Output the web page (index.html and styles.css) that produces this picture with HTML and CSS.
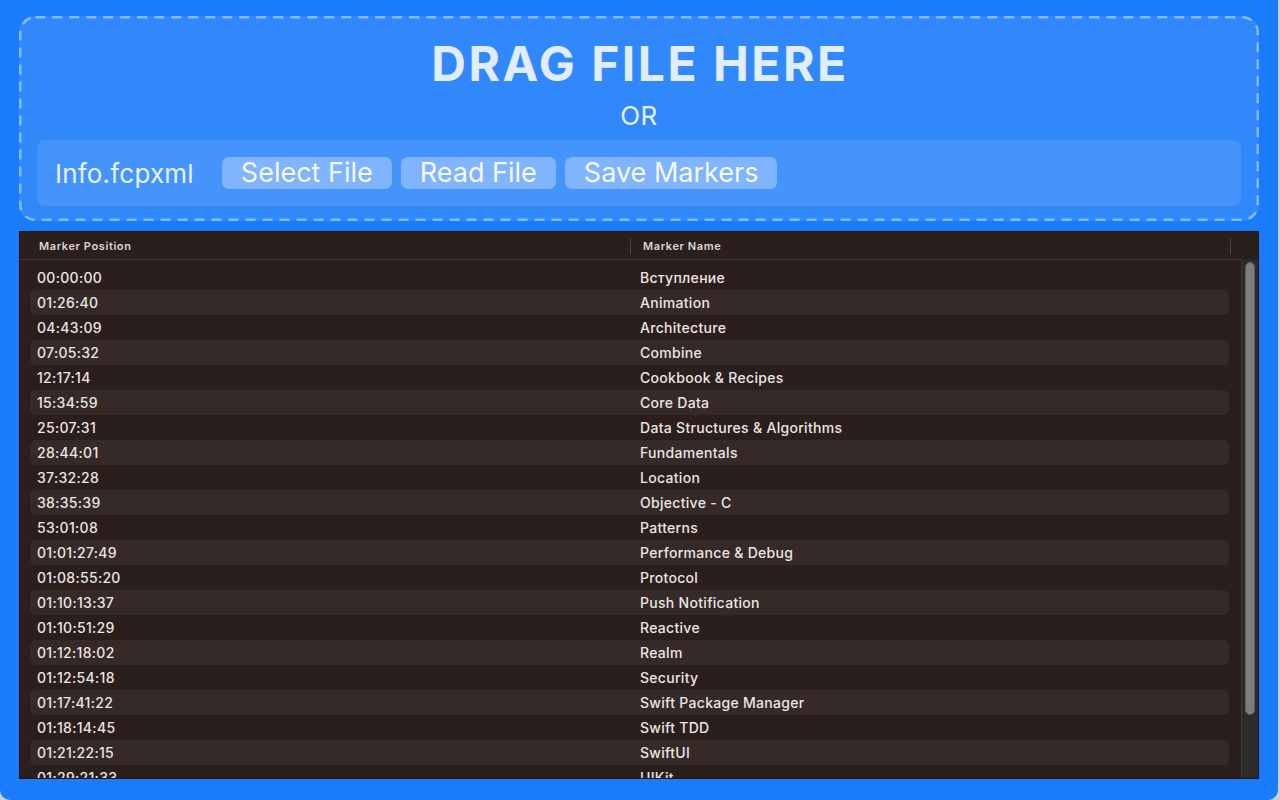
FILE: index.html
```html
<!DOCTYPE html>
<html lang="en">
<head>
<meta charset="utf-8">
<title>Markers</title>
<link rel="stylesheet" href="styles.css">
</head>
<body>
<div class="app">
  <section class="dropzone">
    <svg class="dash" width="1240" height="205" viewBox="0 0 1240 205" aria-hidden="true">
      <rect x="1.25" y="1.25" width="1237.5" height="202.5" rx="15" ry="15" fill="none" stroke="rgba(255,255,255,0.42)" stroke-width="2.5" stroke-dasharray="10 7"/>
    </svg>
    <h1 class="title">DRAG FILE HERE</h1>
    <div class="or">OR</div>
    <div class="controls">
      <span class="filename">Info.fcpxml</span>
      <div class="buttons">
        <button class="btn">Select File</button>
        <button class="btn">Read File</button>
        <button class="btn">Save Markers</button>
      </div>
    </div>
  </section>

  <section class="table">
    <div class="thead">
      <div class="th th-pos">Marker Position</div>
      <div class="th th-name">Marker Name</div>
      <div class="th th-end"></div>
    </div>
    <div class="tbody">
      <div class="rows">
        <div class="row"><span>00:00:00</span><span>Вступление</span></div>
        <div class="row alt"><span>01:26:40</span><span>Animation</span></div>
        <div class="row"><span>04:43:09</span><span>Architecture</span></div>
        <div class="row alt"><span>07:05:32</span><span>Combine</span></div>
        <div class="row"><span>12:17:14</span><span>Cookbook &amp; Recipes</span></div>
        <div class="row alt"><span>15:34:59</span><span>Core Data</span></div>
        <div class="row"><span>25:07:31</span><span>Data Structures &amp; Algorithms</span></div>
        <div class="row alt"><span>28:44:01</span><span>Fundamentals</span></div>
        <div class="row"><span>37:32:28</span><span>Location</span></div>
        <div class="row alt"><span>38:35:39</span><span>Objective - C</span></div>
        <div class="row"><span>53:01:08</span><span>Patterns</span></div>
        <div class="row alt"><span>01:01:27:49</span><span>Performance &amp; Debug</span></div>
        <div class="row"><span>01:08:55:20</span><span>Protocol</span></div>
        <div class="row alt"><span>01:10:13:37</span><span>Push Notification</span></div>
        <div class="row"><span>01:10:51:29</span><span>Reactive</span></div>
        <div class="row alt"><span>01:12:18:02</span><span>Realm</span></div>
        <div class="row"><span>01:12:54:18</span><span>Security</span></div>
        <div class="row alt"><span>01:17:41:22</span><span>Swift Package Manager</span></div>
        <div class="row"><span>01:18:14:45</span><span>Swift TDD</span></div>
        <div class="row alt"><span>01:21:22:15</span><span>SwiftUI</span></div>
        <div class="row"><span>01:29:21:33</span><span>UIKit</span></div>
      </div>
      <div class="scrolltrack"><div class="thumb"></div></div>
    </div>
  </section>
</div>
</body>
</html>
```

FILE: styles.css
```css
* { box-sizing: border-box; }

html, body {
  margin: 0;
  padding: 0;
  width: 1280px;
  height: 800px;
  overflow: hidden;
  background: #cfcfcf;
  font-family: Inter, "Noto Sans", sans-serif;
}

.app {
  width: 1278px;
  height: 800px;
  background: #1b7cf9;
  border-radius: 0 0 10px 10px;
  padding: 16px 19px 0 19px;
  display: flex;
  flex-direction: column;
}

.dropzone {
  position: relative;
  width: 1240px;
  height: 205px;
  background: #3088fb;
  border-radius: 16px;
  padding: 21px 18px 15px;
  display: flex;
  flex-direction: column;
  align-items: center;
}

.dash {
  position: absolute;
  left: 0;
  top: 0;
  pointer-events: none;
}

.title {
  margin: 0;
  font-size: 48px;
  line-height: 54px;
  font-weight: 700;
  color: #e1ecfd;
  letter-spacing: 2.5px;
  padding-left: 2px;
}

.or {
  margin-top: 10px;
  font-size: 26px;
  line-height: 30px;
  color: #e6f0fe;
  letter-spacing: 0.5px;
}

.controls {
  margin-top: 9px;
  align-self: stretch;
  height: 66px;
  background: #4594fb;
  border-radius: 8px;
  padding: 0 18px;
  display: flex;
  align-items: center;
  gap: 28px;
}

.filename {
  font-size: 26px;
  color: #e8f1fe;
  letter-spacing: 0.2px;
}

.buttons {
  display: flex;
  gap: 9px;
}

.btn {
  height: 32px;
  padding: 0 19px;
  border: none;
  border-radius: 7px;
  background: #80b4fc;
  color: #f6f9ff;
  font-family: inherit;
  font-size: 27px;
  line-height: 32px;
}

.table {
  margin-top: 10px;
  width: 1240px;
  height: 548px;
  background: #2b1f1e;
  border: 1px solid #1d1211;
  display: flex;
  flex-direction: column;
  overflow: hidden;
}

.thead {
  height: 28px;
  flex: none;
  display: flex;
  align-items: center;
  border-bottom: 1px solid #463a38;
  margin-right: 17px;
}

.th {
  font-size: 11px;
  font-weight: 600;
  color: #ded6d4;
  height: 16px;
  line-height: 16px;
  letter-spacing: 0.6px;
}

.th-pos {
  width: 610px;
  padding-left: 19px;
}

.th-name {
  width: 600px;
  padding-left: 12px;
  border-left: 1px solid #4a3f3d;
}

.th-end {
  border-left: 1px solid #4a3f3d;
  width: 1px;
}

.tbody {
  flex: 1;
  display: flex;
  min-height: 0;
}

.rows {
  flex: 1;
  padding: 5px 12px 0 10px;
  overflow: hidden;
}

.row {
  height: 25px;
  display: grid;
  grid-template-columns: 603px 1fr;
  align-items: center;
  padding-left: 7px;
  border-radius: 6px;
  font-size: 14px;
  font-weight: 500;
  color: #ebe5e3;
  letter-spacing: 0.3px;
}

.row.alt {
  background: #352a28;
}

.scrolltrack {
  width: 17px;
  flex: none;
  background: #2b2b2b;
  border-left: 1px solid #3b3b3b;
  padding: 2px 0 0 3px;
}

.thumb {
  width: 10px;
  height: 453px;
  background: #7d7d7d;
  border: 1px solid #5c5c5c;
  border-radius: 5px;
}
```
